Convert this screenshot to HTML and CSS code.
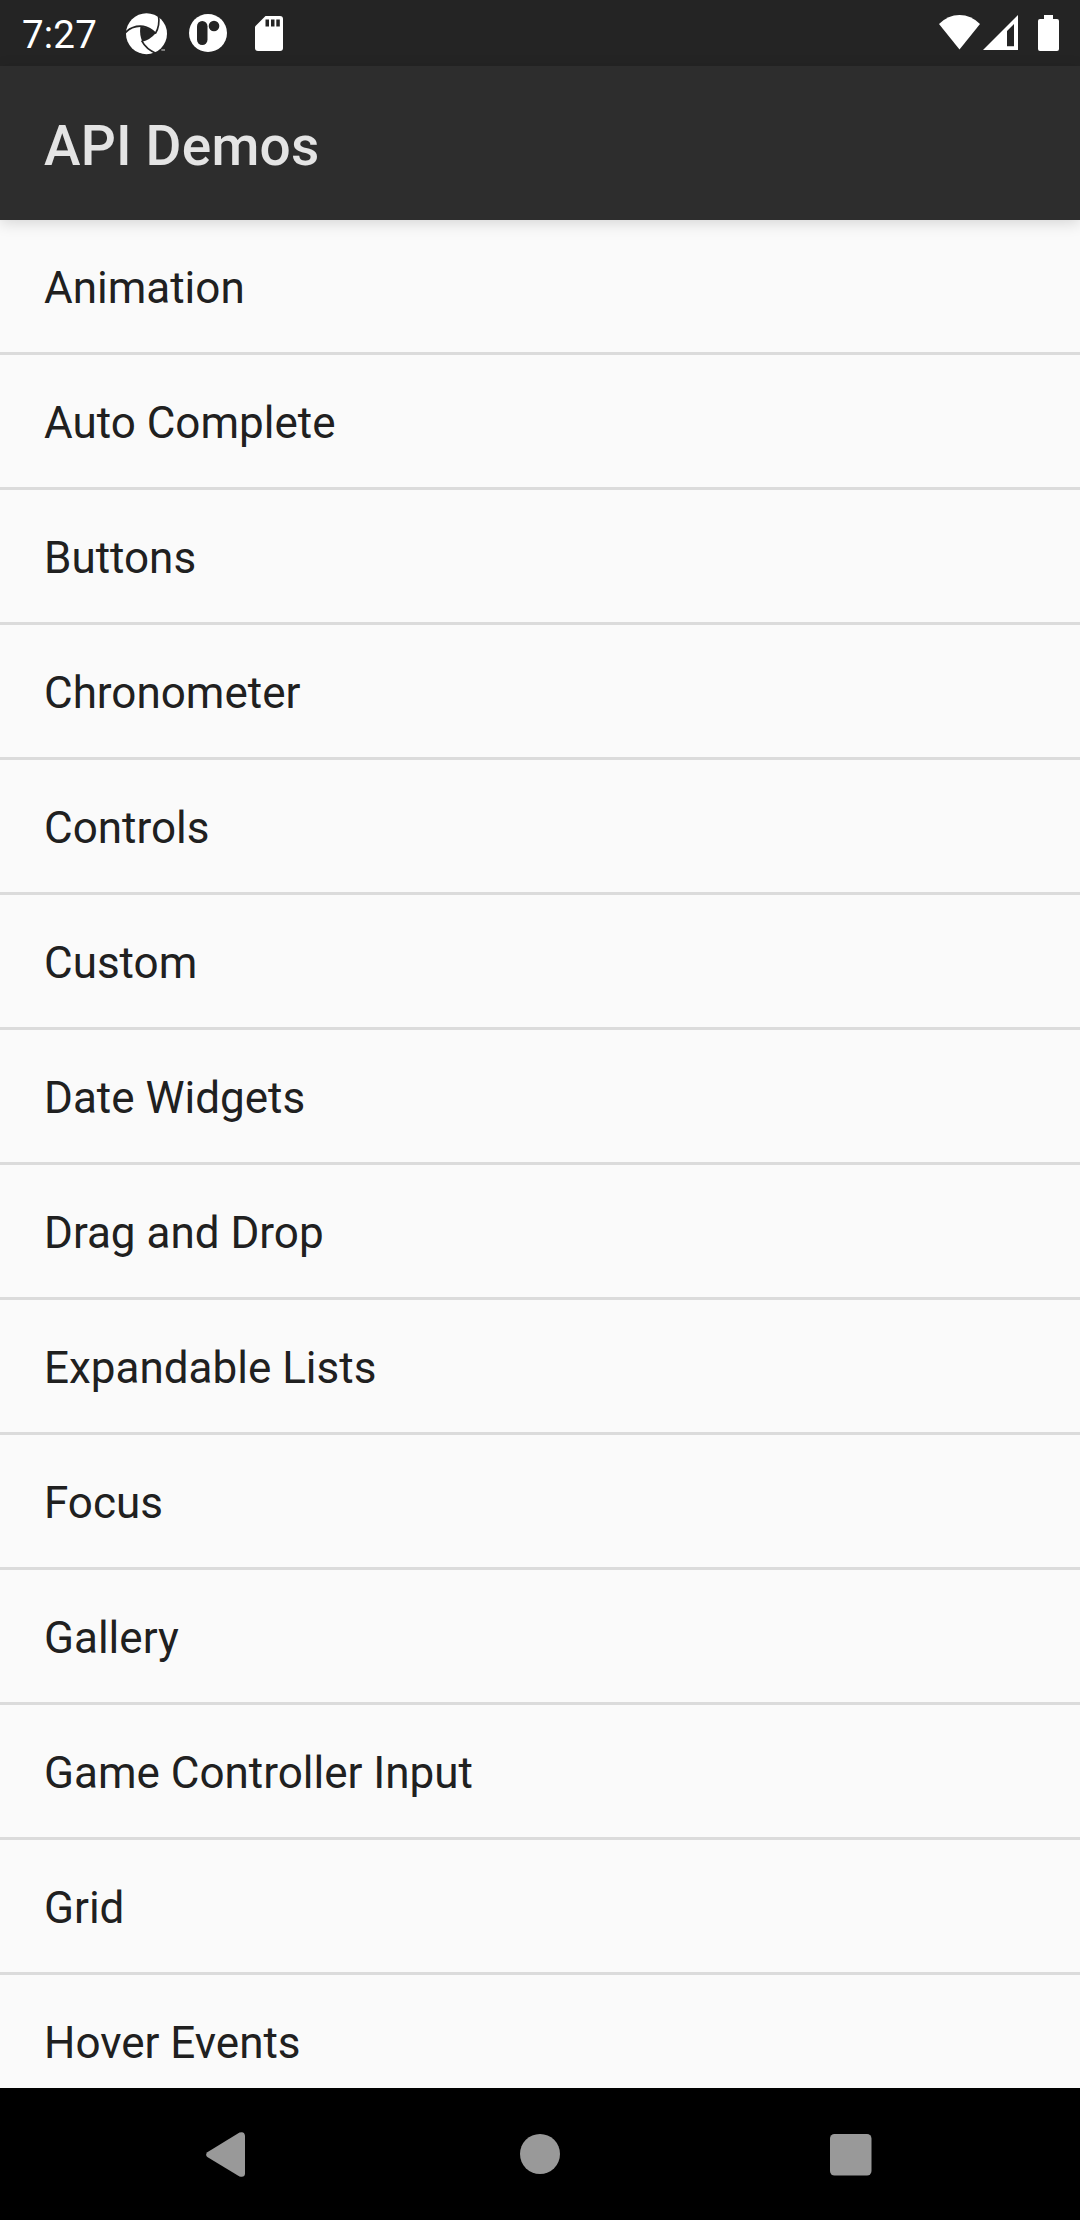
FILE: index.html
```html
<!DOCTYPE html>
<html lang="en">
<head>
<meta charset="utf-8">
<title>API Demos</title>
<link rel="stylesheet" href="styles.css">
</head>
<body>
<div class="screen">
  <div class="status-bar">
    <span class="clock">7:27</span>
    <svg class="icon-shutter" width="42" height="42" viewBox="378 38 126 126">
      <circle cx="439.5" cy="100" r="61.5" fill="#fff"/>
      <path d="M421 79Q448 80 467 99Q450 119 427 124Q418 104 421 79Z" fill="#242424"/>
      <g fill="none" stroke="#242424" stroke-width="5">
        <path d="M376 97Q398 74 430 78Q450 82 467 99"/>
        <path d="M475 42Q481 75 466 100"/>
        <path d="M425 121Q438 147 470 160"/>
      </g>
      <path d="M484 149h11" stroke="#aaa" stroke-width="4"/>
    </svg>
    <svg class="icon-recorder" width="38" height="38" viewBox="0 0 38 38">
      <circle cx="19" cy="19" r="19" fill="#fff"/>
      <rect x="8" y="7" width="10.5" height="24" rx="5.2" fill="#242424"/>
      <circle cx="25" cy="12" r="5.3" fill="#242424"/>
    </svg>
    <svg class="icon-card" width="28" height="35" viewBox="0 0 28 35">
      <path d="M10.500 0H25Q28 0 28 3V32Q28 35 25 35H3Q0 35 0 32V10.500Z" fill="#fff"/>
      <path d="M10.500 3.500h3.500v7h-3.500zM16 3.500h3.500v7H16zM21.300 3.500h3.500v7h-3.500z" fill="#242424"/>
    </svg>
    <svg class="icon-wifi" width="41" height="35" viewBox="0 0 41 35">
      <path d="M0 9Q9 0 20.500 0T41 9L20.500 34.500Z" fill="#fff"/>
    </svg>
    <svg class="icon-signal" width="35" height="35" viewBox="0 0 35 35">
      <path fill-rule="evenodd" d="M0 35L35 0V35ZM24 16V31.300H31V9Z" fill="#fff"/>
    </svg>
    <svg class="icon-battery" width="21" height="36" viewBox="0 0 21 36">
      <path d="M6 0h9v4h4q2 0 2 2v28q0 2-2 2H2q-2 0-2-2V6q0-2 2-2h4z" fill="#fff"/>
    </svg>
  </div>
  <header class="app-bar"><h1>API Demos</h1></header>
  <ul class="list">
    <li>Animation</li>
    <li>Auto Complete</li>
    <li>Buttons</li>
    <li>Chronometer</li>
    <li>Controls</li>
    <li>Custom</li>
    <li>Date Widgets</li>
    <li>Drag and Drop</li>
    <li>Expandable Lists</li>
    <li>Focus</li>
    <li>Gallery</li>
    <li>Game Controller Input</li>
    <li>Grid</li>
    <li>Hover Events</li>
  </ul>
  <nav class="nav-bar">
    <svg class="nav-back" width="39" height="46" viewBox="0 0 39 46">
      <path d="M1.300 20.300L33.500 .6Q38.700-1 39 4V41.500Q38.700 46 33.500 44.400L1.300 25Q-1 22.600 1.300 20.300Z" fill="#999"/>
    </svg>
    <svg class="nav-home" width="40" height="40" viewBox="0 0 40 40">
      <circle cx="20" cy="20" r="20" fill="#999"/>
    </svg>
    <svg class="nav-recent" width="42" height="42" viewBox="0 0 42 42">
      <rect width="41.500" height="41.500" rx="4.500" fill="#999"/>
    </svg>
  </nav>
</div>
</body>
</html>
```
FILE: styles.css
```css
* {
  box-sizing: border-box;
}

body {
  margin: 0;
  font-family: Roboto, "Liberation Sans", sans-serif;
  background: #fafafa;
}

.screen {
  display: flex;
  flex-direction: column;
  width: 1080px;
  height: 2220px;
  overflow: hidden;
}

.status-bar {
  display: flex;
  flex: none;
  align-items: flex-start;
  height: 66px;
  padding: 13px 21px 0 22px;
  background: #242424;
}

.clock {
  width: 104px;
  margin-top: -1px;
  color: #fff;
  font-size: 38.5px;
  letter-spacing: 0.2px;
  line-height: 45px;
}

.icon-recorder {
  margin: 1px 0 0 20.5px;
}

.icon-card {
  margin: 3px 0 0 28px;
}

.icon-wifi {
  margin: 2px 0 0 auto;
}

.icon-signal {
  margin: 2px 0 0 3px;
}

.icon-battery {
  margin: 2px 0 0 20px;
}

.app-bar {
  z-index: 1;
  display: flex;
  flex: none;
  align-items: center;
  height: 154px;
  padding: 6px 44px 0;
  background: #2d2d2d;
  box-shadow: 0 3px 14px rgba(0, 0, 0, 0.15);
}

.app-bar h1 {
  margin: 0;
  color: #e4e4e4;
  font-size: 55px;
  font-weight: 500;
  letter-spacing: 0.2px;
  line-height: 64px;
}

.list {
  flex: 1;
  min-height: 0;
  margin: 0;
  padding: 0;
  overflow: hidden;
  list-style: none;
}

.list li {
  height: 135px;
  padding: 4px 44px 0;
  border-bottom: 3px solid #dbdbdb;
  color: #202020;
  font-size: 44px;
  line-height: 128px;
}

.nav-bar {
  display: flex;
  flex: none;
  align-items: flex-start;
  height: 132px;
  padding: 44px 208px 0 206px;
  background: #000;
}

.nav-home {
  margin: 2px 0 0 275px;
}

.nav-recent {
  margin: 2px 0 0 270px;
}
```
